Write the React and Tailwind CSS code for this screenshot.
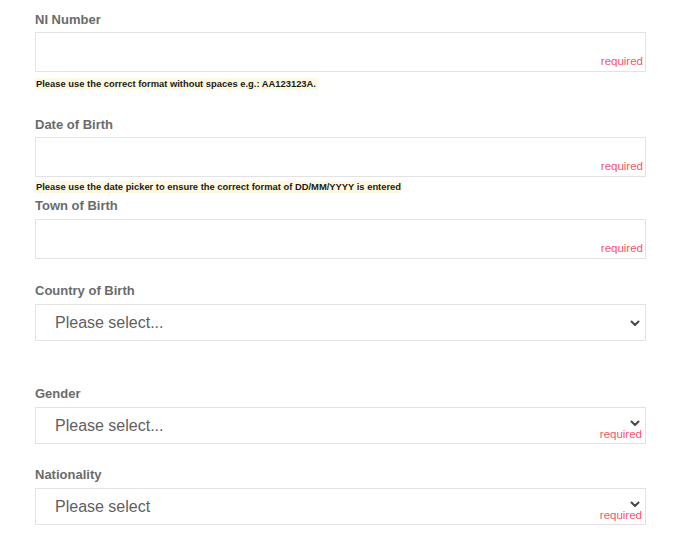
import React from 'react';

const font = { fontFamily: '"Liberation Sans", Arial, sans-serif' };

function Required({ className = '' }) {
  return (
    <span className={`pointer-events-none absolute right-[3px] text-[11.5px] leading-none text-[#f2566a] ${className}`}>
      required
    </span>
  );
}

function Chevron() {
  return (
    <svg width="10" height="7" viewBox="0 0 10 7" className="block">
      <polyline points="1.5,1.5 5,5 8.5,1.5" fill="none" stroke="#4a4a4a" strokeWidth="2.1" strokeLinecap="round" strokeLinejoin="round" />
    </svg>
  );
}

function Label({ children, className = '' }) {
  return <label className={`block text-[13px] font-bold leading-[16px] text-[#6b6b6b] ${className}`}>{children}</label>;
}

function TextField({ label, labelClass, help, helpClass }) {
  return (
    <div>
      <Label className={labelClass}>{label}</Label>
      <div className="relative">
        <input type="text" className="block h-[40px] w-full border border-[#e3e3e3] bg-white px-3 outline-none" />
        <Required className="bottom-[5px]" />
      </div>
      {help && (
        <div className={`flex ${helpClass}`}>
          <span className="bg-[#fdf9e1] px-[1px] text-[9.4px] font-bold leading-[12px] text-[#1a1a1a]">{help}</span>
        </div>
      )}
    </div>
  );
}

function SelectField({ label, placeholder, required, className = '' }) {
  return (
    <div className={className}>
      <Label className="mb-[5px]">{label}</Label>
      <div className="relative flex h-[37px] items-center border border-[#e3e3e3] bg-white pl-[19px]">
        <span className="text-[16px] text-[#5f5f5f]">{placeholder}</span>
        {required ? (
          <>
            <span className="absolute right-[5px] top-[12px]"><Chevron /></span>
            <Required className="bottom-[3px]" />
          </>
        ) : (
          <span className="absolute right-[5px] top-[15px]"><Chevron /></span>
        )}
      </div>
    </div>
  );
}

export default function App() {
  return (
    <div className="min-h-[543px] w-[678px] bg-white pl-[35px] pt-[12px]" style={font}>
      <div className="w-[611px]">
        <TextField
          label="NI Number"
          labelClass="mb-[4px]"
          help="Please use the correct format without spaces e.g.: AA123123A."
          helpClass="mt-[6px]"
        />
        <div className="mt-[27px]">
          <TextField
            label="Date of Birth"
            labelClass="mb-[4px]"
            help="Please use the date picker to ensure the correct format of DD/MM/YYYY is entered"
            helpClass="mt-[4px]"
          />
        </div>
        <div className="mt-[5px]">
          <TextField label="Town of Birth" labelClass="mb-[5px]" />
        </div>
        <SelectField className="mt-[24px]" label="Country of Birth" placeholder="Please select..." />
        <SelectField className="mt-[45px]" label="Gender" placeholder="Please select..." required />
        <SelectField className="mt-[23px]" label="Nationality" placeholder="Please select" required />
      </div>
    </div>
  );
}
